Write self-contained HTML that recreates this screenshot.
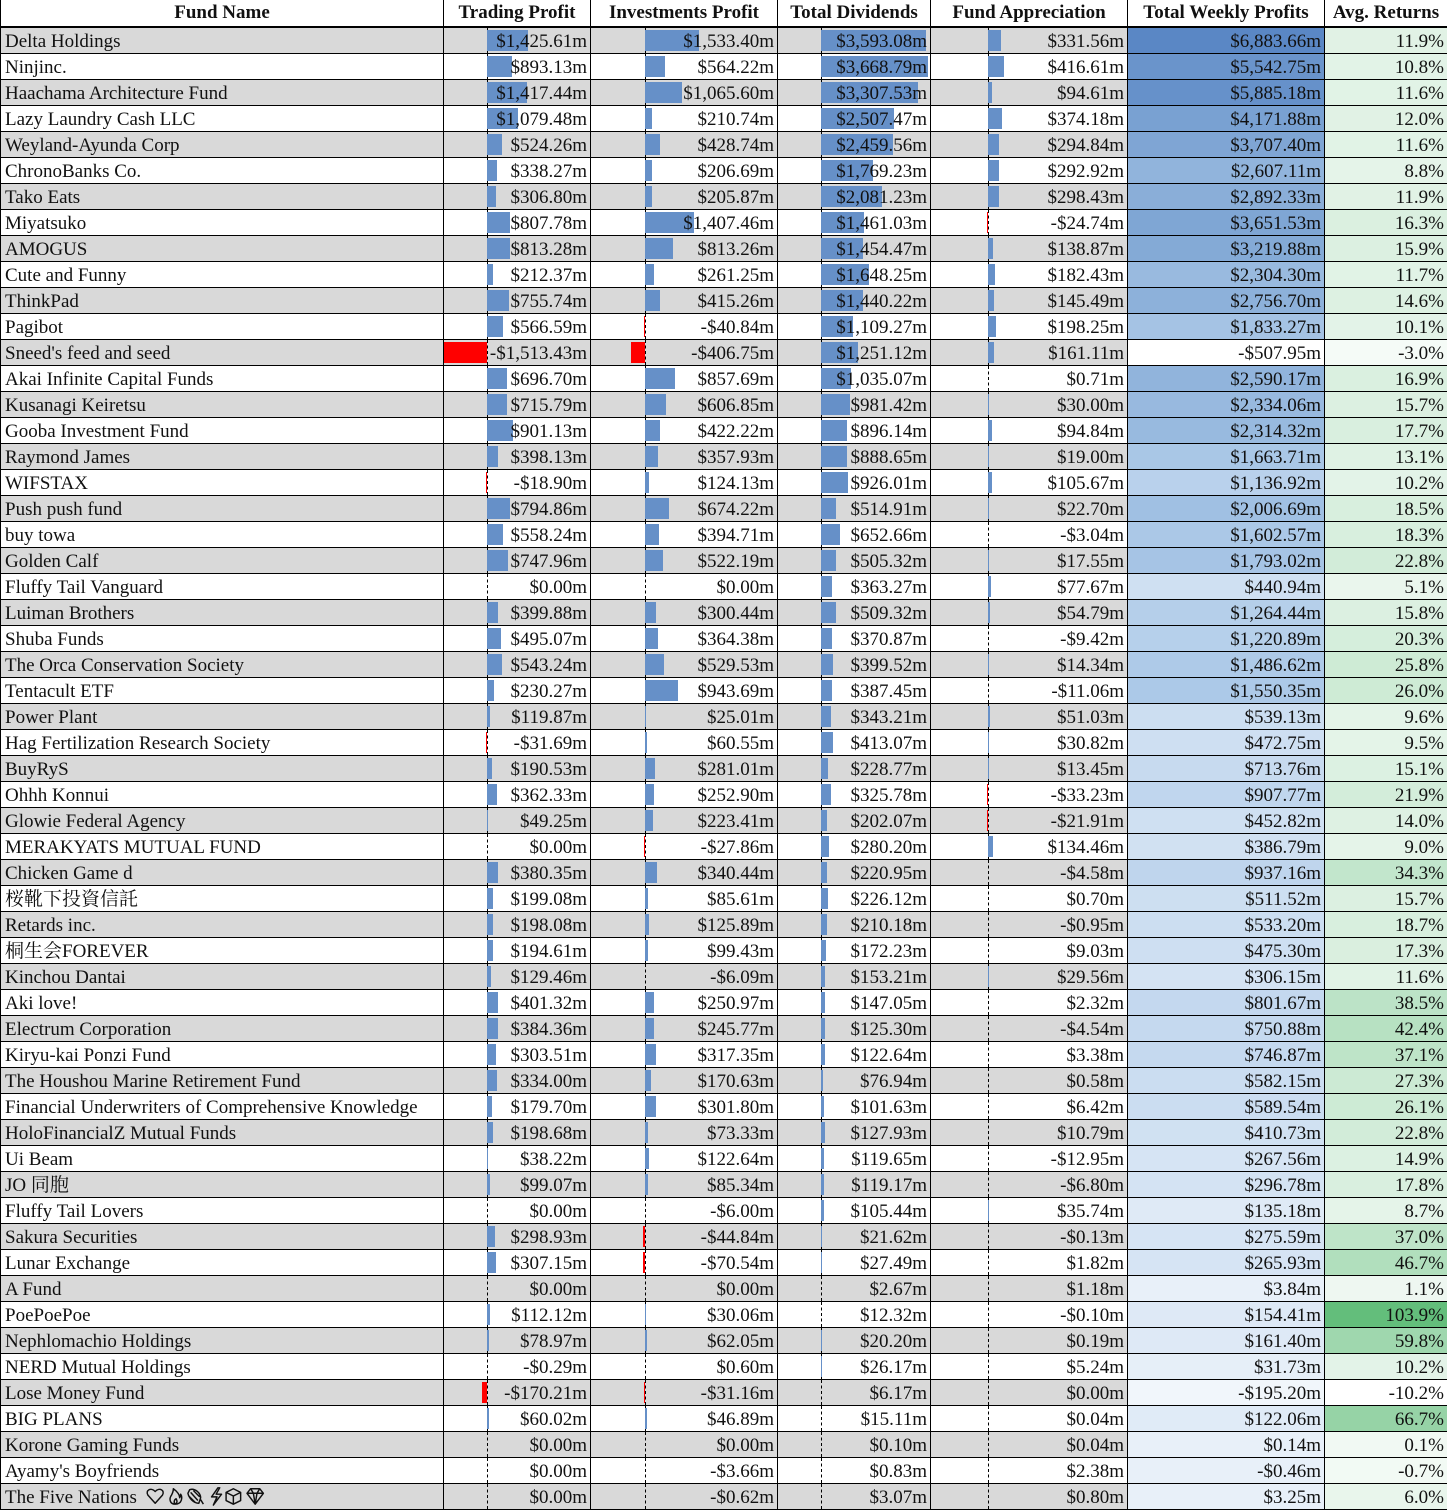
<!DOCTYPE html>
<html><head><meta charset="utf-8"><style>
html,body{margin:0;padding:0;background:#fff;overflow:hidden}
table{border-collapse:collapse;table-layout:fixed;width:1447px;font-family:"Liberation Serif","Noto Serif CJK SC","Noto Sans CJK JP",serif;font-size:19px;color:#111}
td,th{border:1px solid #000;position:relative;white-space:nowrap;overflow:hidden;text-align:right}
td{padding:2px 3px 0 0;height:23px;line-height:23px}
th{font-size:19px;font-weight:bold;text-align:center;height:26px;line-height:26px;border-bottom:2px solid #000;padding:0;border-top:none}
td:first-child{text-align:left;padding-left:4px}
tr.g td{background:#d9d9d9}
td i,td b{position:absolute;top:2px;bottom:2px;background:#6690c8}
td b{background:#f00}
td span{position:relative}
td:nth-child(2)::before,td:nth-child(3)::before,td:nth-child(4)::before,td:nth-child(5)::before{content:"";position:absolute;top:0;bottom:0;border-left:1px dashed #000}
td:nth-child(2)::before,td:nth-child(2) i{left:43px}
td:nth-child(2) b{right:103px}
td:nth-child(3)::before,td:nth-child(3) i{left:54px}
td:nth-child(3) b{right:132px}
td:nth-child(4)::before,td:nth-child(4) i{left:43px}
td:nth-child(4) b{right:109px}
td:nth-child(5)::before,td:nth-child(5) i{left:57px}
td:nth-child(5) b{right:139px}
svg{vertical-align:-3px}
</style></head><body>
<table>
<colgroup><col style="width:443px"><col style="width:147px"><col style="width:187px"><col style="width:153px"><col style="width:197px"><col style="width:197px"><col style="width:123px"></colgroup>
<tr><th>Fund Name</th><th>Trading Profit</th><th>Investments Profit</th><th>Total Dividends</th><th>Fund Appreciation</th><th>Total Weekly Profits</th><th>Avg. Returns</th></tr>
<tr class=g><td>Delta Holdings</td><td><i style="width:41px"></i><span>$1,425.61m</span></td><td><i style="width:54px"></i><span>$1,533.40m</span></td><td><i style="width:105px"></i><span>$3,593.08m</span></td><td><i style="width:13px"></i><span>$331.56m</span></td><td style="background:#5a87c5">$6,883.66m</td><td style="background:#e1f2e5">11.9%</td></tr>
<tr><td>Ninjinc.</td><td><i style="width:25px"></i><span>$893.13m</span></td><td><i style="width:20px"></i><span>$564.22m</span></td><td><i style="width:107px"></i><span>$3,668.79m</span></td><td><i style="width:16px"></i><span>$416.61m</span></td><td style="background:#6a94cb">$5,542.75m</td><td style="background:#e2f3e7">10.8%</td></tr>
<tr class=g><td>Haachama Architecture Fund</td><td><i style="width:40px"></i><span>$1,417.44m</span></td><td><i style="width:37px"></i><span>$1,065.60m</span></td><td><i style="width:97px"></i><span>$3,307.53m</span></td><td><i style="width:4px"></i><span>$94.61m</span></td><td style="background:#6691ca">$5,885.18m</td><td style="background:#e1f3e6">11.6%</td></tr>
<tr><td>Lazy Laundry Cash LLC</td><td><i style="width:31px"></i><span>$1,079.48m</span></td><td><i style="width:7px"></i><span>$210.74m</span></td><td><i style="width:73px"></i><span>$2,507.47m</span></td><td><i style="width:14px"></i><span>$374.18m</span></td><td style="background:#79a1d2">$4,171.88m</td><td style="background:#e1f2e5">12.0%</td></tr>
<tr class=g><td>Weyland-Ayunda Corp</td><td><i style="width:15px"></i><span>$524.26m</span></td><td><i style="width:15px"></i><span>$428.74m</span></td><td><i style="width:72px"></i><span>$2,459.56m</span></td><td><i style="width:11px"></i><span>$294.84m</span></td><td style="background:#7fa5d4">$3,707.40m</td><td style="background:#e1f3e6">11.6%</td></tr>
<tr><td>ChronoBanks Co.</td><td><i style="width:10px"></i><span>$338.27m</span></td><td><i style="width:7px"></i><span>$206.69m</span></td><td><i style="width:52px"></i><span>$1,769.23m</span></td><td><i style="width:11px"></i><span>$292.92m</span></td><td style="background:#91b4dc">$2,607.11m</td><td style="background:#e5f4e9">8.8%</td></tr>
<tr class=g><td>Tako Eats</td><td><i style="width:9px"></i><span>$306.80m</span></td><td><i style="width:7px"></i><span>$205.87m</span></td><td><i style="width:61px"></i><span>$2,081.23m</span></td><td><i style="width:11px"></i><span>$298.43m</span></td><td style="background:#8aaed8">$2,892.33m</td><td style="background:#e1f2e5">11.9%</td></tr>
<tr><td>Miyatsuko</td><td><i style="width:23px"></i><span>$807.78m</span></td><td><i style="width:49px"></i><span>$1,407.46m</span></td><td><i style="width:43px"></i><span>$1,461.03m</span></td><td><b style="width:1px"></b><span>-$24.74m</span></td><td style="background:#7fa6d4">$3,651.53m</td><td style="background:#dbf0e0">16.3%</td></tr>
<tr class=g><td>AMOGUS</td><td><i style="width:23px"></i><span>$813.28m</span></td><td><i style="width:28px"></i><span>$813.26m</span></td><td><i style="width:42px"></i><span>$1,454.47m</span></td><td><i style="width:5px"></i><span>$138.87m</span></td><td style="background:#84aad6">$3,219.88m</td><td style="background:#dcf0e1">15.9%</td></tr>
<tr><td>Cute and Funny</td><td><i style="width:6px"></i><span>$212.37m</span></td><td><i style="width:9px"></i><span>$261.25m</span></td><td><i style="width:48px"></i><span>$1,648.25m</span></td><td><i style="width:7px"></i><span>$182.43m</span></td><td style="background:#99badf">$2,304.30m</td><td style="background:#e1f3e6">11.7%</td></tr>
<tr class=g><td>ThinkPad</td><td><i style="width:22px"></i><span>$755.74m</span></td><td><i style="width:15px"></i><span>$415.26m</span></td><td><i style="width:42px"></i><span>$1,440.22m</span></td><td><i style="width:6px"></i><span>$145.49m</span></td><td style="background:#8db1da">$2,756.70m</td><td style="background:#ddf1e2">14.6%</td></tr>
<tr><td>Pagibot</td><td><i style="width:16px"></i><span>$566.59m</span></td><td><b style="width:1px"></b><span>-$40.84m</span></td><td><i style="width:32px"></i><span>$1,109.27m</span></td><td><i style="width:8px"></i><span>$198.25m</span></td><td style="background:#a5c3e4">$1,833.27m</td><td style="background:#e3f3e8">10.1%</td></tr>
<tr class=g><td>Sneed's feed and seed</td><td><b style="width:44px"></b><span>-$1,513.43m</span></td><td><b style="width:14px"></b><span>-$406.75m</span></td><td><i style="width:37px"></i><span>$1,251.12m</span></td><td><i style="width:6px"></i><span>$161.11m</span></td><td style="background:#ffffff">-$507.95m</td><td style="background:#f5fbf7">-3.0%</td></tr>
<tr><td>Akai Infinite Capital Funds</td><td><i style="width:20px"></i><span>$696.70m</span></td><td><i style="width:30px"></i><span>$857.69m</span></td><td><i style="width:30px"></i><span>$1,035.07m</span></td><td><span>$0.71m</span></td><td style="background:#91b4dc">$2,590.17m</td><td style="background:#daf0e0">16.9%</td></tr>
<tr class=g><td>Kusanagi Keiretsu</td><td><i style="width:20px"></i><span>$715.79m</span></td><td><i style="width:21px"></i><span>$606.85m</span></td><td><i style="width:29px"></i><span>$981.42m</span></td><td><i style="width:1px"></i><span>$30.00m</span></td><td style="background:#98b9df">$2,334.06m</td><td style="background:#dcf0e1">15.7%</td></tr>
<tr><td>Gooba Investment Fund</td><td><i style="width:26px"></i><span>$901.13m</span></td><td><i style="width:15px"></i><span>$422.22m</span></td><td><i style="width:26px"></i><span>$896.14m</span></td><td><i style="width:4px"></i><span>$94.84m</span></td><td style="background:#98badf">$2,314.32m</td><td style="background:#d9efdf">17.7%</td></tr>
<tr class=g><td>Raymond James</td><td><i style="width:11px"></i><span>$398.13m</span></td><td><i style="width:13px"></i><span>$357.93m</span></td><td><i style="width:26px"></i><span>$888.65m</span></td><td><i style="width:1px"></i><span>$19.00m</span></td><td style="background:#a9c7e6">$1,663.71m</td><td style="background:#dff2e4">13.1%</td></tr>
<tr><td>WIFSTAX</td><td><b style="width:1px"></b><span>-$18.90m</span></td><td><i style="width:4px"></i><span>$124.13m</span></td><td><i style="width:27px"></i><span>$926.01m</span></td><td><i style="width:4px"></i><span>$105.67m</span></td><td style="background:#b9d1ec">$1,136.92m</td><td style="background:#e3f3e8">10.2%</td></tr>
<tr class=g><td>Push push fund</td><td><i style="width:23px"></i><span>$794.86m</span></td><td><i style="width:24px"></i><span>$674.22m</span></td><td><i style="width:15px"></i><span>$514.91m</span></td><td><i style="width:1px"></i><span>$22.70m</span></td><td style="background:#a0c0e3">$2,006.69m</td><td style="background:#d8efde">18.5%</td></tr>
<tr><td>buy towa</td><td><i style="width:16px"></i><span>$558.24m</span></td><td><i style="width:14px"></i><span>$394.71m</span></td><td><i style="width:19px"></i><span>$652.66m</span></td><td><span>-$3.04m</span></td><td style="background:#abc8e7">$1,602.57m</td><td style="background:#d8efde">18.3%</td></tr>
<tr class=g><td>Golden Calf</td><td><i style="width:21px"></i><span>$747.96m</span></td><td><i style="width:18px"></i><span>$522.19m</span></td><td><i style="width:15px"></i><span>$505.32m</span></td><td><i style="width:1px"></i><span>$17.55m</span></td><td style="background:#a6c4e5">$1,793.02m</td><td style="background:#d2ecd9">22.8%</td></tr>
<tr><td>Fluffy Tail Vanguard</td><td><span>$0.00m</span></td><td><span>$0.00m</span></td><td><i style="width:11px"></i><span>$363.27m</span></td><td><i style="width:3px"></i><span>$77.67m</span></td><td style="background:#cfe0f2">$440.94m</td><td style="background:#eaf6ed">5.1%</td></tr>
<tr class=g><td>Luiman Brothers</td><td><i style="width:11px"></i><span>$399.88m</span></td><td><i style="width:11px"></i><span>$300.44m</span></td><td><i style="width:15px"></i><span>$509.32m</span></td><td><i style="width:2px"></i><span>$54.79m</span></td><td style="background:#b5cfea">$1,264.44m</td><td style="background:#dcf0e1">15.8%</td></tr>
<tr><td>Shuba Funds</td><td><i style="width:14px"></i><span>$495.07m</span></td><td><i style="width:13px"></i><span>$364.38m</span></td><td><i style="width:11px"></i><span>$370.87m</span></td><td><span>-$9.42m</span></td><td style="background:#b6d0eb">$1,220.89m</td><td style="background:#d5eedc">20.3%</td></tr>
<tr class=g><td>The Orca Conservation Society</td><td><i style="width:15px"></i><span>$543.24m</span></td><td><i style="width:19px"></i><span>$529.53m</span></td><td><i style="width:12px"></i><span>$399.52m</span></td><td><i style="width:1px"></i><span>$14.34m</span></td><td style="background:#aecae8">$1,486.62m</td><td style="background:#ceebd5">25.8%</td></tr>
<tr><td>Tentacult ETF</td><td><i style="width:7px"></i><span>$230.27m</span></td><td><i style="width:33px"></i><span>$943.69m</span></td><td><i style="width:11px"></i><span>$387.45m</span></td><td><span>-$11.06m</span></td><td style="background:#acc9e8">$1,550.35m</td><td style="background:#ceebd5">26.0%</td></tr>
<tr class=g><td>Power Plant</td><td><i style="width:3px"></i><span>$119.87m</span></td><td><i style="width:1px"></i><span>$25.01m</span></td><td><i style="width:10px"></i><span>$343.21m</span></td><td><i style="width:2px"></i><span>$51.03m</span></td><td style="background:#ccdef1">$539.13m</td><td style="background:#e4f4e8">9.6%</td></tr>
<tr><td>Hag Fertilization Research Society</td><td><b style="width:1px"></b><span>-$31.69m</span></td><td><i style="width:2px"></i><span>$60.55m</span></td><td><i style="width:12px"></i><span>$413.07m</span></td><td><i style="width:1px"></i><span>$30.82m</span></td><td style="background:#cedff2">$472.75m</td><td style="background:#e4f4e8">9.5%</td></tr>
<tr class=g><td>BuyRyS</td><td><i style="width:5px"></i><span>$190.53m</span></td><td><i style="width:10px"></i><span>$281.01m</span></td><td><i style="width:7px"></i><span>$228.77m</span></td><td><i style="width:1px"></i><span>$13.45m</span></td><td style="background:#c7daef">$713.76m</td><td style="background:#dcf1e2">15.1%</td></tr>
<tr><td>Ohhh Konnui</td><td><i style="width:10px"></i><span>$362.33m</span></td><td><i style="width:9px"></i><span>$252.90m</span></td><td><i style="width:10px"></i><span>$325.78m</span></td><td><b style="width:1px"></b><span>-$33.23m</span></td><td style="background:#c0d6ee">$907.77m</td><td style="background:#d3edda">21.9%</td></tr>
<tr class=g><td>Glowie Federal Agency</td><td><i style="width:1px"></i><span>$49.25m</span></td><td><i style="width:8px"></i><span>$223.41m</span></td><td><i style="width:6px"></i><span>$202.07m</span></td><td><b style="width:1px"></b><span>-$21.91m</span></td><td style="background:#cfe0f2">$452.82m</td><td style="background:#def1e3">14.0%</td></tr>
<tr><td>MERAKYATS MUTUAL FUND</td><td><span>$0.00m</span></td><td><b style="width:1px"></b><span>-$27.86m</span></td><td><i style="width:8px"></i><span>$280.20m</span></td><td><i style="width:5px"></i><span>$134.46m</span></td><td style="background:#d1e1f2">$386.79m</td><td style="background:#e5f4e9">9.0%</td></tr>
<tr class=g><td>Chicken Game d</td><td><i style="width:11px"></i><span>$380.35m</span></td><td><i style="width:12px"></i><span>$340.44m</span></td><td><i style="width:6px"></i><span>$220.95m</span></td><td><span>-$4.58m</span></td><td style="background:#bfd5ed">$937.16m</td><td style="background:#c2e6cc">34.3%</td></tr>
<tr><td>桜靴下投資信託</td><td><i style="width:6px"></i><span>$199.08m</span></td><td><i style="width:3px"></i><span>$85.61m</span></td><td><i style="width:7px"></i><span>$226.12m</span></td><td><span>$0.70m</span></td><td style="background:#cddff1">$511.52m</td><td style="background:#dcf0e1">15.7%</td></tr>
<tr class=g><td>Retards inc.</td><td><i style="width:6px"></i><span>$198.08m</span></td><td><i style="width:4px"></i><span>$125.89m</span></td><td><i style="width:6px"></i><span>$210.18m</span></td><td><span>-$0.95m</span></td><td style="background:#ccdef1">$533.20m</td><td style="background:#d8efde">18.7%</td></tr>
<tr><td>桐生会FOREVER</td><td><i style="width:6px"></i><span>$194.61m</span></td><td><i style="width:3px"></i><span>$99.43m</span></td><td><i style="width:5px"></i><span>$172.23m</span></td><td><span>$9.03m</span></td><td style="background:#cedff2">$475.30m</td><td style="background:#daefdf">17.3%</td></tr>
<tr class=g><td>Kinchou Dantai</td><td><i style="width:4px"></i><span>$129.46m</span></td><td><span>-$6.09m</span></td><td><i style="width:4px"></i><span>$153.21m</span></td><td><i style="width:1px"></i><span>$29.56m</span></td><td style="background:#d4e3f3">$306.15m</td><td style="background:#e1f3e6">11.6%</td></tr>
<tr><td>Aki love!</td><td><i style="width:11px"></i><span>$401.32m</span></td><td><i style="width:9px"></i><span>$250.97m</span></td><td><i style="width:4px"></i><span>$147.05m</span></td><td><span>$2.32m</span></td><td style="background:#c4d8ef">$801.67m</td><td style="background:#bce3c7">38.5%</td></tr>
<tr class=g><td>Electrum Corporation</td><td><i style="width:11px"></i><span>$384.36m</span></td><td><i style="width:9px"></i><span>$245.77m</span></td><td><i style="width:4px"></i><span>$125.30m</span></td><td><span>-$4.54m</span></td><td style="background:#c5d9ef">$750.88m</td><td style="background:#b7e1c2">42.4%</td></tr>
<tr><td>Kiryu-kai Ponzi Fund</td><td><i style="width:9px"></i><span>$303.51m</span></td><td><i style="width:11px"></i><span>$317.35m</span></td><td><i style="width:4px"></i><span>$122.64m</span></td><td><span>$3.38m</span></td><td style="background:#c5d9ef">$746.87m</td><td style="background:#bee4c8">37.1%</td></tr>
<tr class=g><td>The Houshou Marine Retirement Fund</td><td><i style="width:10px"></i><span>$334.00m</span></td><td><i style="width:6px"></i><span>$170.63m</span></td><td><i style="width:2px"></i><span>$76.94m</span></td><td><span>$0.58m</span></td><td style="background:#cbddf1">$582.15m</td><td style="background:#ccead4">27.3%</td></tr>
<tr><td>Financial Underwriters of Comprehensive Knowledge</td><td><i style="width:5px"></i><span>$179.70m</span></td><td><i style="width:11px"></i><span>$301.80m</span></td><td><i style="width:3px"></i><span>$101.63m</span></td><td><span>$6.42m</span></td><td style="background:#cbddf1">$589.54m</td><td style="background:#cdebd5">26.1%</td></tr>
<tr class=g><td>HoloFinancialZ Mutual Funds</td><td><i style="width:6px"></i><span>$198.68m</span></td><td><i style="width:3px"></i><span>$73.33m</span></td><td><i style="width:4px"></i><span>$127.93m</span></td><td><span>$10.79m</span></td><td style="background:#d0e1f2">$410.73m</td><td style="background:#d2ecd9">22.8%</td></tr>
<tr><td>Ui Beam</td><td><i style="width:1px"></i><span>$38.22m</span></td><td><i style="width:4px"></i><span>$122.64m</span></td><td><i style="width:3px"></i><span>$119.65m</span></td><td><span>-$12.95m</span></td><td style="background:#d6e4f4">$267.56m</td><td style="background:#dcf1e2">14.9%</td></tr>
<tr class=g><td>JO 同胞</td><td><i style="width:3px"></i><span>$99.07m</span></td><td><i style="width:3px"></i><span>$85.34m</span></td><td><i style="width:3px"></i><span>$119.17m</span></td><td><span>-$6.80m</span></td><td style="background:#d4e3f3">$296.78m</td><td style="background:#d9efdf">17.8%</td></tr>
<tr><td>Fluffy Tail Lovers</td><td><span>$0.00m</span></td><td><span>-$6.00m</span></td><td><i style="width:3px"></i><span>$105.44m</span></td><td><i style="width:1px"></i><span>$35.74m</span></td><td style="background:#dfeaf6">$135.18m</td><td style="background:#e5f4e9">8.7%</td></tr>
<tr class=g><td>Sakura Securities</td><td><i style="width:8px"></i><span>$298.93m</span></td><td><b style="width:2px"></b><span>-$44.84m</span></td><td><i style="width:1px"></i><span>$21.62m</span></td><td><span>-$0.13m</span></td><td style="background:#d6e4f4">$275.59m</td><td style="background:#bee4c8">37.0%</td></tr>
<tr><td>Lunar Exchange</td><td><i style="width:9px"></i><span>$307.15m</span></td><td><b style="width:2px"></b><span>-$70.54m</span></td><td><i style="width:1px"></i><span>$27.49m</span></td><td><span>$1.82m</span></td><td style="background:#d6e4f4">$265.93m</td><td style="background:#b1dfbd">46.7%</td></tr>
<tr class=g><td>A Fund</td><td><span>$0.00m</span></td><td><span>$0.00m</span></td><td><span>$2.67m</span></td><td><span>$1.18m</span></td><td style="background:#e8f0f9">$3.84m</td><td style="background:#eef7f1">1.1%</td></tr>
<tr><td>PoePoePoe</td><td><i style="width:3px"></i><span>$112.12m</span></td><td><i style="width:1px"></i><span>$30.06m</span></td><td><span>$12.32m</span></td><td><span>-$0.10m</span></td><td style="background:#dee9f6">$154.41m</td><td style="background:#63be7b">103.9%</td></tr>
<tr class=g><td>Nephlomachio Holdings</td><td><i style="width:2px"></i><span>$78.97m</span></td><td><i style="width:2px"></i><span>$62.05m</span></td><td><i style="width:1px"></i><span>$20.20m</span></td><td><span>$0.19m</span></td><td style="background:#dee9f6">$161.40m</td><td style="background:#9fd7ae">59.8%</td></tr>
<tr><td>NERD Mutual Holdings</td><td><span>-$0.29m</span></td><td><span>$0.60m</span></td><td><i style="width:1px"></i><span>$26.17m</span></td><td><span>$5.24m</span></td><td style="background:#e6eff8">$31.73m</td><td style="background:#e3f3e8">10.2%</td></tr>
<tr class=g><td>Lose Money Fund</td><td><b style="width:5px"></b><span>-$170.21m</span></td><td><b style="width:1px"></b><span>-$31.16m</span></td><td><span>$6.17m</span></td><td><span>$0.00m</span></td><td style="background:#f1f6fb">-$195.20m</td><td style="background:#ffffff">-10.2%</td></tr>
<tr><td>BIG PLANS</td><td><i style="width:2px"></i><span>$60.02m</span></td><td><i style="width:2px"></i><span>$46.89m</span></td><td><span>$15.11m</span></td><td><span>$0.04m</span></td><td style="background:#e0ebf7">$122.06m</td><td style="background:#96d3a6">66.7%</td></tr>
<tr class=g><td>Korone Gaming Funds</td><td><span>$0.00m</span></td><td><span>$0.00m</span></td><td><span>$0.10m</span></td><td><span>$0.04m</span></td><td style="background:#e8f0f9">$0.14m</td><td style="background:#f1f9f3">0.1%</td></tr>
<tr><td>Ayamy's Boyfriends</td><td><span>$0.00m</span></td><td><span>-$3.66m</span></td><td><span>$0.83m</span></td><td><span>$2.38m</span></td><td style="background:#e8f0f9">-$0.46m</td><td style="background:#f2faf4">-0.7%</td></tr>
<tr class=g><td>The Five Nations <svg width="130" height="20" viewBox="0 0 136 22" fill="none" stroke="#111" stroke-width="1.6" stroke-linejoin="round"><path d="M11 19 L3 10 C0 5 6 1 11 6 C16 1 22 5 19 10 Z"/><path d="M33 20 C27 20 26 14 29 10 C30 8 31 6 31 3 C35 6 38 9 38 13 C39 11 39 10 39 9 C41 12 41 20 33 20 Z M33 20 C31 18 32 15 34 14 C35 16 36 18 33 20 Z"/><path d="M49 4 C55 2 61 8 61 13 L59 19 C53 19 48 13 47 8 Z M50 7 L58 16 M53 5 L60 12 M48 11 L55 18 M61 15 L64 20"/><path d="M80 2 L73 12 L79 12 L75 21 L84 9 L78 9 L82 2 Z"/><path d="M97 3 L105 7 L105 16 L97 20 L89 16 L89 7 Z M89 7 L97 11 L105 7 M97 11 L97 20"/><path d="M116 3 L126 3 L130 8 L121 20 L112 8 Z M112 8 L130 8 M116 3 L119 8 L121 20 M126 3 L123 8 L121 20"/></svg></td><td><span>$0.00m</span></td><td><span>-$0.62m</span></td><td><span>$3.07m</span></td><td><span>$0.80m</span></td><td style="background:#e8f0f9">$3.25m</td><td style="background:#e9f6ec">6.0%</td></tr>
</table>
</body></html>
